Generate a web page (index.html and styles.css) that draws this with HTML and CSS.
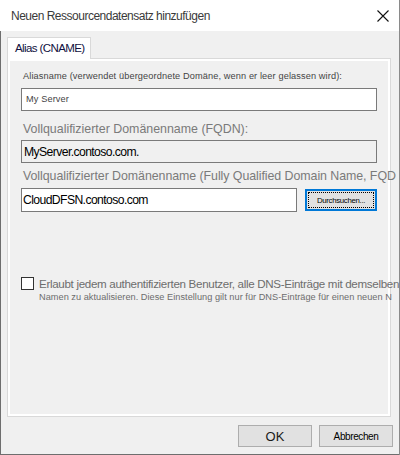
FILE: index.html
```html
<!DOCTYPE html>
<html lang="de">
<head>
<meta charset="utf-8">
<title>Neuen Ressourcendatensatz hinzufügen</title>
<link rel="stylesheet" href="styles.css">
</head>
<body>
<div class="window">
  <div class="titlebar">
    <span class="title">Neuen Ressourcendatensatz hinzufügen</span>
    <svg class="close" width="12" height="12" viewBox="0 0 12 12"><path d="M0.5 0.5 L11.5 11.5 M11.5 0.5 L0.5 11.5" stroke="#111" stroke-width="1.1" fill="none"/></svg>
  </div>
  <div class="client">
    <div class="tabs"><div class="tab">Alias (CNAME)</div></div>
    <div class="panel">
      <div class="page">
        <div class="small label1">Aliasname (verwendet übergeordnete Domäne, wenn er leer gelassen wird):</div>
        <div class="field f1"><span class="small val">My Server</span></div>
        <div class="big label2">Vollqualifizierter Domänenname (FQDN):</div>
        <div class="field f2 readonly"><span class="value">MyServer.contoso.com.</span></div>
        <div class="big label3">Vollqualifizierter Domänenname (Fully Qualified Domain Name, FQD</div>
        <div class="row">
          <div class="field f3"><span class="value scrolled">CloudDFSN.contoso.com</span></div>
          <div class="browse"><span class="focus">Durchsuchen...</span></div>
        </div>
        <div class="check">
          <span class="box"></span>
          <div class="checktext">
            <div class="big line1">Erlaubt jedem authentifizierten Benutzer, alle DNS-Einträge mit demselben</div>
            <div class="small line2">Namen zu aktualisieren. Diese Einstellung gilt nur für DNS-Einträge für einen neuen N</div>
          </div>
        </div>
      </div>
    </div>
    <div class="footer">
      <div class="btn ok">OK</div>
      <div class="btn cancel">Abbrechen</div>
    </div>
  </div>
</div>
</body>
</html>
```
FILE: styles.css
```css
* { box-sizing: border-box; }
html, body { margin: 0; padding: 0; }
body { width: 400px; height: 455px; overflow: hidden; background: #fff; font-family: "Liberation Sans", Arial, sans-serif; }

.window { width: 400px; height: 455px; display: flex; flex-direction: column; border-right: 1px solid #8a8a8a; }

.titlebar { height: 31px; background: #fff; display: flex; align-items: center; justify-content: space-between; padding: 0 10px 0 11px; }
.title { font-size: 12px; color: #3a3a3a; margin-top: 1px; white-space: nowrap; letter-spacing: -0.5px; }
.close { margin-top: 1px; }

.client { flex: 1; background: #f0f0f0; border-left: 1px solid #6e6e6e; border-bottom: 1px solid #6e6e6e; padding: 6px 6px 0 6px; display: flex; flex-direction: column; }

.tabs { display: flex; height: 21px; position: relative; z-index: 1; }
.tab { width: 84px; height: 22px; background: #fff; border: 1px solid #d9d9d9; border-bottom: none; font-size: 11.5px; color: #101040; padding: 4px 0 0 7px; letter-spacing: -0.6px; white-space: nowrap; }

.panel { width: 384px; height: 359px; border: 1px solid #d9d9d9; background: #fff; padding: 2px; }
.page { height: 100%; background: #f0f0f0; padding: 10px 0 0 11px; position: relative; }

.small { font-size: 9.2px; line-height: 11px; color: #333; letter-spacing: 0.12px; white-space: nowrap; }
.big { font-size: 12.4px; line-height: 15px; color: #7a7a7a; white-space: nowrap; }
.label1 { padding-left: 2px; color: #444; }

.field { height: 23px; border: 1px solid #7a7a7a; background: #fff; display: flex; align-items: center; padding-left: 4px; overflow: hidden; }
.f1 { width: 356px; margin-top: 6px; }
.f2 { width: 356px; margin-top: 3px; }
.readonly { background: #f0f0f0; padding-left: 2px; }
.label2 { margin-top: 11px; padding-left: 2px; }
.label3 { margin-top: 6px; padding-left: 2px; letter-spacing: -0.06px; }
.val { color: #444; }
.value { font-size: 12.2px; letter-spacing: -0.6px; color: #000; white-space: nowrap; }
.scrolled { margin-left: -3px; }

.row { display: flex; margin-top: 4px; align-items: flex-start; }
.f3 { width: 276px; height: 24px; }
.browse { margin-left: 8px; margin-top: 1px; width: 72px; height: 22px; border: 2px solid #0078d7; background: #e1e1e1; padding: 1px; display: flex; }
.focus { flex: 1; border: 1px dotted #000; font-size: 7.8px; color: #000; display: flex; align-items: center; justify-content: center; letter-spacing: -0.3px; white-space: nowrap; }

.check { display: flex; margin-top: 65px; }
.box { width: 13px; height: 13px; border: 1px solid #333; background: #fff; flex: none; }
.checktext { margin-left: 5px; }
.line1 { line-height: 13px; color: #6d6d6d; font-size: 11.6px; letter-spacing: -0.32px; }
.line2 { margin-top: 2px; color: #6d6d6d; letter-spacing: 0.03px; }

.footer { display: flex; justify-content: flex-end; gap: 7px; margin-top: 8px; }
.btn { width: 74px; height: 22px; background: #e1e1e1; border: 1px solid #adadad; display: flex; align-items: center; justify-content: center; color: #000; white-space: nowrap; }
.ok { font-size: 13px; color: #1a1a1a; }
.cancel { font-size: 10px; letter-spacing: -0.4px; }
```
